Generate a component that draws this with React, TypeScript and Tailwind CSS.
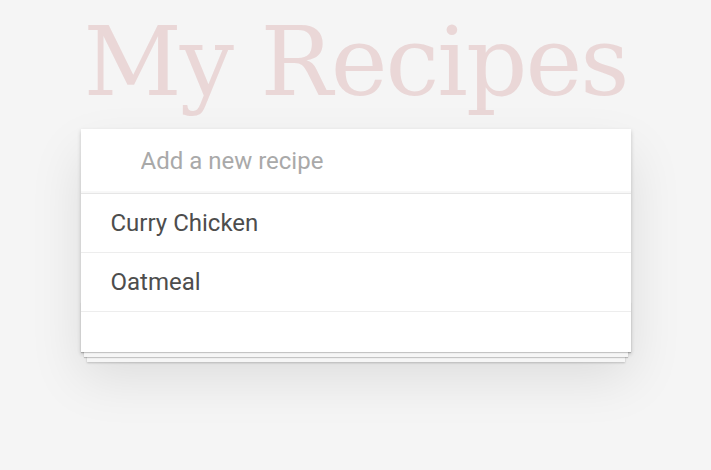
import React from "react";

const recipes = ["Curry Chicken", "Oatmeal"];

export default function App() {
  return (
    <div className="min-h-screen bg-[#f5f5f5] font-['Roboto',sans-serif] text-[#4d4d4d]">
      <div className="mx-auto w-[550px]">
        <h1 className="-mx-[40px] mb-[4px] whitespace-nowrap text-center font-['DejaVu_Serif',serif] text-[96px] font-light leading-[125px] tracking-[-2px] text-[rgba(175,47,47,0.15)]">
          My Recipes
        </h1>
        <section className="relative bg-white shadow-[0_2px_4px_0_rgba(0,0,0,0.2),0_25px_50px_0_rgba(0,0,0,0.1)]">
          <input
            placeholder="Add a new recipe"
            className="block w-full border-0 bg-transparent py-4 pl-[60px] pr-4 text-[24px] leading-[32px] text-[#4d4d4d] outline-none placeholder:text-[#a9a9a9] shadow-[inset_0_-2px_1px_rgba(0,0,0,0.03)]"
          />
          <ul className="border-t border-[#e6e6e6]">
            {recipes.map((r) => (
              <li key={r} className="border-b border-[#ededed] py-[15px] pl-[30px] pr-[15px] text-[24px] leading-[28px]">
                {r}
              </li>
            ))}
          </ul>
          <footer className="relative h-[40px]">
            <div className="absolute inset-x-0 bottom-0 h-[50px] shadow-[0_1px_1px_rgba(0,0,0,0.2),0_8px_0_-3px_#f6f6f6,0_9px_1px_-3px_rgba(0,0,0,0.2),0_16px_0_-6px_#f6f6f6,0_17px_2px_-6px_rgba(0,0,0,0.2)]" />
            <div className="absolute inset-0 bg-white" />
          </footer>
        </section>
      </div>
    </div>
  );
}
